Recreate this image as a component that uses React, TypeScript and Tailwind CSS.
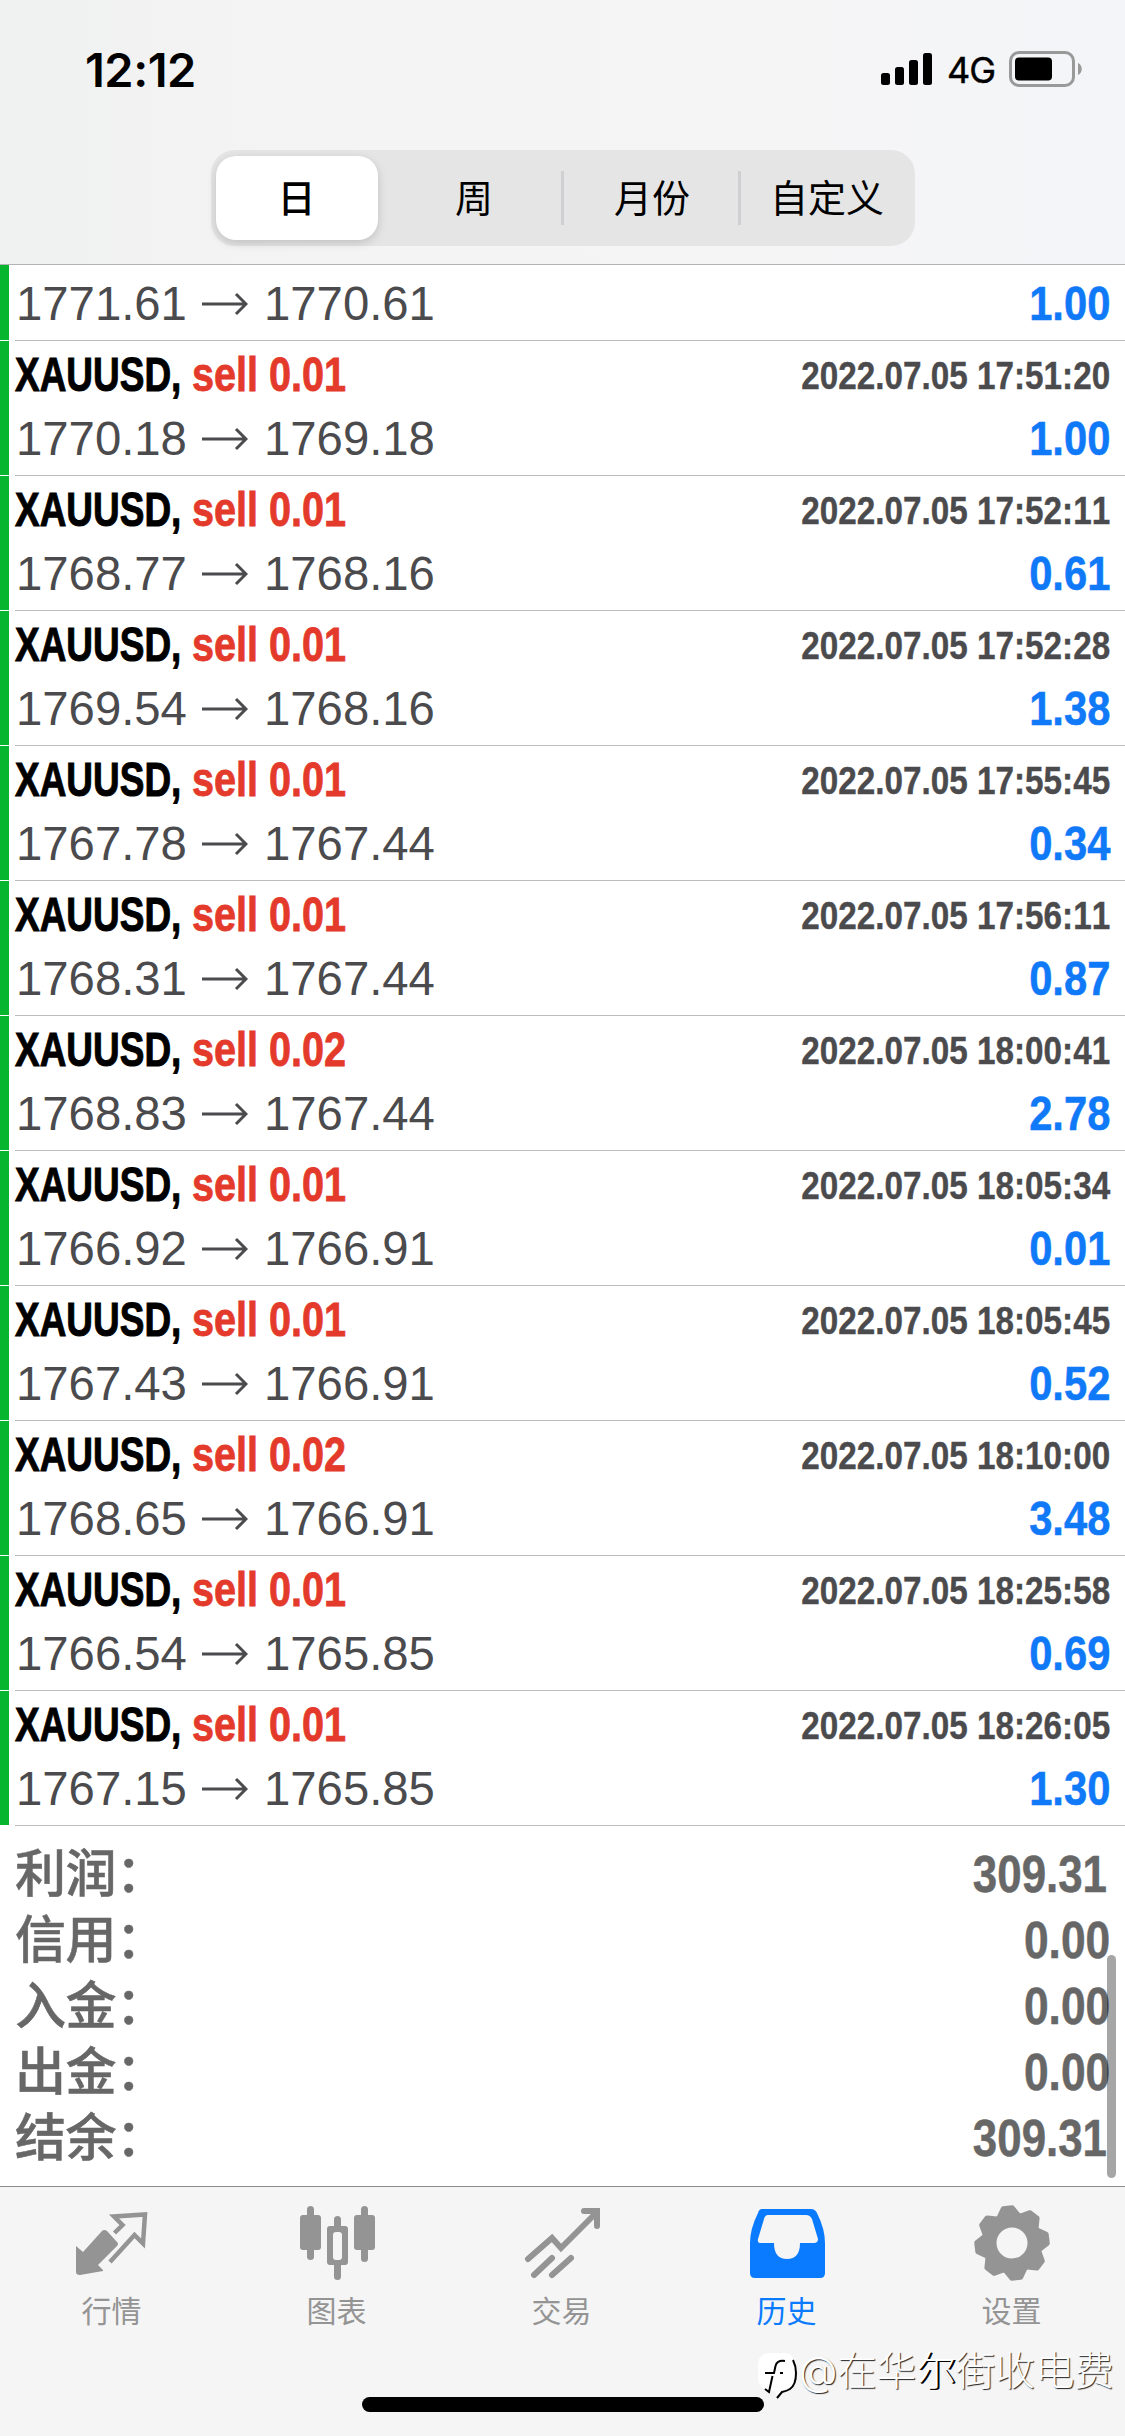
import type { ReactNode } from "react";

interface IDeal {
  lot: string;
  open: string;
  close: string;
  time: string;
  profit: string;
}

const deals: IDeal[] = [
  { lot: "0.01", open: "1770.18", close: "1769.18", time: "2022.07.05 17:51:20", profit: "1.00" },
  { lot: "0.01", open: "1768.77", close: "1768.16", time: "2022.07.05 17:52:11", profit: "0.61" },
  { lot: "0.01", open: "1769.54", close: "1768.16", time: "2022.07.05 17:52:28", profit: "1.38" },
  { lot: "0.01", open: "1767.78", close: "1767.44", time: "2022.07.05 17:55:45", profit: "0.34" },
  { lot: "0.01", open: "1768.31", close: "1767.44", time: "2022.07.05 17:56:11", profit: "0.87" },
  { lot: "0.02", open: "1768.83", close: "1767.44", time: "2022.07.05 18:00:41", profit: "2.78" },
  { lot: "0.01", open: "1766.92", close: "1766.91", time: "2022.07.05 18:05:34", profit: "0.01" },
  { lot: "0.01", open: "1767.43", close: "1766.91", time: "2022.07.05 18:05:45", profit: "0.52" },
  { lot: "0.02", open: "1768.65", close: "1766.91", time: "2022.07.05 18:10:00", profit: "3.48" },
  { lot: "0.01", open: "1766.54", close: "1765.85", time: "2022.07.05 18:25:58", profit: "0.69" },
  { lot: "0.01", open: "1767.15", close: "1765.85", time: "2022.07.05 18:26:05", profit: "1.30" },
];

const totals = [
  { label: "利润", value: "309.31" },
  { label: "信用", value: "0.00" },
  { label: "入金", value: "0.00" },
  { label: "出金", value: "0.00" },
  { label: "结余", value: "309.31" },
];

const gearTeeth = [0, 45, 90, 135, 180, 225, 270, 315];

function StatusBar() {
  return (
    <div className="flex h-[138px] items-center justify-between pl-[85px] pr-[42px]">
      <span className="font-['Inter','Liberation_Sans',sans-serif] text-[47px] font-semibold leading-none tracking-[-0.5px]">12:12</span>
      <div className="flex items-center">
        <svg width="52" height="34" viewBox="0 0 52 34">
          <rect x="0" y="21" width="9" height="12" rx="2.5" />
          <rect x="14" y="15" width="9" height="18" rx="2.5" />
          <rect x="28" y="8" width="9" height="25" rx="2.5" />
          <rect x="42" y="1" width="9" height="32" rx="2.5" />
        </svg>
        <span className="ml-[14px] w-[62px] pt-[2px] font-['Inter','Liberation_Sans',sans-serif] text-[36px] leading-none tracking-[-1px] [-webkit-text-stroke:0.4px_black]">4G</span>
        <svg width="74" height="36" viewBox="0 0 74 36">
          <rect x="1.5" y="1.5" width="63" height="33" rx="8.5" fill="none" stroke="#999" strokeWidth="3" />
          <rect x="6" y="6.5" width="37" height="23" rx="4" />
          <path d="M69 12c5 2 5 10 0 12z" fill="#999" />
        </svg>
      </div>
    </div>
  );
}

function Segments() {
  return (
    <div className="mx-auto mt-[12px] flex h-[96px] w-[704px] items-center rounded-[24px] bg-[#e5e5e6] p-[6px] font-['Inter','Noto_Sans_CJK_SC',sans-serif] text-[38px] leading-none">
      <div className="-ml-px flex h-[84px] w-[162px] items-center justify-center rounded-[20px] bg-white font-medium shadow-[0_3px_10px_rgba(0,0,0,0.16)]">日</div>
      <div className="flex flex-1 items-center justify-center pl-[10px]">周</div>
      <div className="h-[54px] w-[3px] bg-[#d0d0d2]" />
      <div className="flex w-[174px] items-center justify-center pl-[3px]">月份</div>
      <div className="h-[54px] w-[3px] bg-[#d0d0d2]" />
      <div className="flex w-[168px] items-center justify-center pl-[5px]">自定义</div>
    </div>
  );
}

function Prices({ open, close, profit }: { open: string; close: string; profit: string }) {
  return (
    <div className="flex h-[62px] items-center justify-between pl-[16px] pr-[15px] text-[48px] leading-none">
      <div className="flex items-center text-[#4b4b4e]">
        <span className="w-[186px] origin-left scale-x-[0.985]">{open}</span>
        <svg width="46" height="24" viewBox="0 0 46 24" fill="none" stroke="#4b4b4e" strokeWidth="3">
          <path d="M0 12h44M34 2l10 10-10 10" />
        </svg>
        <span className="ml-[16px] origin-left scale-x-[0.985]">{close}</span>
      </div>
      <span className="origin-right scale-x-[0.87] font-bold text-[#0f79f8] [-webkit-text-stroke:0.5px_#0f79f8]">{profit}</span>
    </div>
  );
}

function DealRow({ deal }: { deal: IDeal }) {
  return (
    <div className="flex h-[135px]">
      <div className="mb-px w-[9px] bg-[#08b52e]" />
      <div className="-ml-[9px] flex-1">
        <div className="flex h-[67px] items-center justify-between pl-[15px] pr-[15px] pt-px leading-none">
          <div className="flex text-[48px] font-bold">
            <span className="w-[177px] origin-left scale-x-[0.77] whitespace-nowrap [-webkit-text-stroke:1px_black]">XAUUSD,</span>
            <span className="origin-left scale-x-[0.825] whitespace-nowrap text-[#e43a2b] [-webkit-text-stroke:0.8px_#e43a2b]">sell {deal.lot}</span>
          </div>
          <span className="origin-right scale-x-[0.853] text-[39px] font-bold text-[#4b4b4e] [-webkit-text-stroke:0.4px_#4b4b4e]">{deal.time}</span>
        </div>
        <Prices open={deal.open} close={deal.close} profit={deal.profit} />
        <div className="ml-[15px] mt-[5px] h-px bg-[#bdbdbf]" />
      </div>
    </div>
  );
}

function Tab({ label, active, children }: { label: string; active?: boolean; children: ReactNode }) {
  return (
    <div className={active ? "flex flex-1 flex-col items-center text-[#0a7bff]" : "flex flex-1 flex-col items-center text-[#949494]"}>
      <svg width="80" height="80" viewBox="0 0 80 80">{children}</svg>
      <span className="mt-[8px] text-[30px] leading-[40px]">{label}</span>
    </div>
  );
}

function TabBar() {
  return (
    <div className="relative h-[250px] border-t border-[#8d8d8f] bg-[#f5f5f5] pt-[16px] font-['Inter','Noto_Sans_CJK_SC',sans-serif]">
      <div className="-ml-px mr-px flex">
        <Tab label="行情">
          <path d="M4 43l7 6 19-21q2-2 5 0l10 11q2 2 0 4L26 62l5 5v1L8 72q-4 0-4-3z" fill="currentColor" />
          <path d="M42.500 30l8-8-8.500-8.500 31-2-2 29-8.500-8.500L38 59" fill="none" stroke="currentColor" strokeWidth="4.500" />
        </Tab>
        <Tab label="图表">
          <g fill="currentColor">
            <rect x="10" y="3" width="7" height="54" rx="3.5" />
            <rect x="3" y="12" width="21" height="35" rx="3" />
            <rect x="37" y="13" width="7" height="64" rx="3.5" />
            <rect x="30" y="23" width="21" height="39" rx="3" />
            <rect x="64" y="3" width="7" height="56" rx="3.5" />
            <rect x="57" y="12" width="21" height="35" rx="3" />
          </g>
          <rect x="36" y="29" width="9" height="28" rx="3" fill="#f5f5f5" />
        </Tab>
        <Tab label="交易">
          <g fill="none" stroke="currentColor" strokeWidth="6" strokeLinecap="round">
            <path d="M6 56l24-21 9 10L74 10M62 8h13v15" />
            <path d="M12 72l18-17M30 72l19-17" />
          </g>
        </Tab>
        <Tab label="历史" active>
          <path d="M15 6h49q4 0 6 4 8 16 8 30v30q0 5-5 5H8q-5 0-5-5V40q0-14 8-30 1-4 4-4z" fill="currentColor" />
          <path d="M21 12h38q4 0 6 4l6 20q0 4-4 4H53q0 16-13 16T27 40H14q-4 0-3-4l6-20q1-4 4-4z" fill="#f5f5f5" />
        </Tab>
        <Tab label="设置">
          <circle cx="40" cy="40" r="23" fill="none" stroke="currentColor" strokeWidth="15" />
          <g fill="currentColor" stroke="currentColor" strokeWidth="5" strokeLinejoin="round">
            {gearTeeth.map((angle) => (
              <path key={angle} d="M35.500 5h9l5 8v3h-19v-3z" transform={`rotate(${angle - 7} 40 40)`} />
            ))}
          </g>
        </Tab>
      </div>
      <div className="absolute bottom-[24px] left-[362px] h-[15px] w-[402px] rounded-full bg-black" />
      <div className="absolute left-[757px] top-[165px] flex">
        <svg width="42" height="48" viewBox="0 0 42 48">
          <path d="M12 1h15q12 1 12 15v8q0 11-13 14l-6 7-2-6Q1 39 1 25V14Q1 2 12 1z" fill="#fff" />
          <path d="M36 8q3 6 3 13 0 12-6 16-3 2-8 3l-5 6" fill="none" stroke="#000" strokeWidth="2" />
          <path d="M28 9q-8-1-9.500 5L17 21H8M15.500 24L12 40l-4-3M23 21h3" fill="none" stroke="#000" strokeWidth="2" />
        </svg>
        <span className="-mt-[3px] whitespace-nowrap text-[39.5px] font-light leading-[44px] text-white [text-shadow:1px_1px_1px_#222]">
          @在华<span className="[text-shadow:1px_1px_0_#000,2px_1px_0_#000]">尔</span>街收电费
        </span>
      </div>
    </div>
  );
}

export default function App() {
  return (
    <div className="relative flex h-[2436px] w-[1125px] flex-col overflow-hidden bg-white font-['Liberation_Sans','Noto_Sans_CJK_SC',sans-serif] text-black [font-kerning:none]">
      <header className="h-[265px] border-b border-[#b3b3b5] bg-[linear-gradient(90deg,#eff1f0,#f5f4f4_30%,#f5f5f6_70%,#f4f5f8)]">
        <StatusBar />
        <Segments />
      </header>

      <main className="relative flex-1">
        <div className="flex h-[76px]">
          <div className="mb-px w-[9px] bg-[#08b52e]" />
          <div className="-ml-[9px] flex-1 pt-[8px]">
            <Prices open="1771.61" close="1770.61" profit="1.00" />
            <div className="ml-[15px] mt-[5px] h-px bg-[#bdbdbf]" />
          </div>
        </div>
        {deals.map((deal) => (
          <DealRow key={deal.time} deal={deal} />
        ))}

        <div className="pl-[15px] pr-[15px] pt-[15px] text-[51px] font-bold leading-none text-[#676767]">
          {totals.map((item) => (
            <div key={item.label} className="flex h-[66px] items-center justify-between">
              <span className="mb-[7px] font-['Noto_Sans_CJK_SC',sans-serif] font-medium tracking-[-0.5px] [-webkit-text-stroke:0.5px_#676767]">{item.label}：</span>
              <span className={item.value.endsWith("1") ? "mr-[3px] origin-right scale-x-[0.86] [-webkit-text-stroke:0.5px_#676767]" : "origin-right scale-x-[0.87] [-webkit-text-stroke:0.5px_#676767]"}>{item.value}</span>
            </div>
          ))}
        </div>

        <div className="absolute right-[9px] top-[1690px] h-[223px] w-[9px] rounded-full bg-black/35" />
      </main>

      <TabBar />
    </div>
  );
}
